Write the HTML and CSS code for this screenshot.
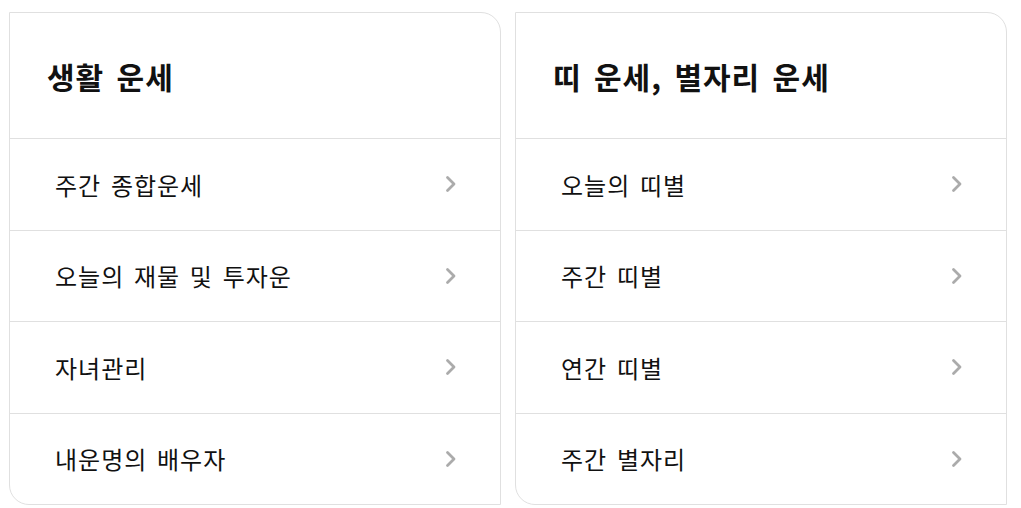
FILE: index.html
```html
<!DOCTYPE html>
<html lang="ko">
<head>
<meta charset="utf-8">
<link rel="stylesheet" href="styles.css">
</head>
<body>
<div class="wrap">
  <section class="card">
    <h2 class="card-title">생활 운세</h2>
    <ul class="list">
      <li class="item"><span>주간 종합운세</span><svg class="chev" viewBox="0 0 12 18"><polyline points="2.5,2.5 9,9 2.5,15.5"/></svg></li>
      <li class="item"><span>오늘의 재물 및 투자운</span><svg class="chev" viewBox="0 0 12 18"><polyline points="2.5,2.5 9,9 2.5,15.5"/></svg></li>
      <li class="item"><span>자녀관리</span><svg class="chev" viewBox="0 0 12 18"><polyline points="2.5,2.5 9,9 2.5,15.5"/></svg></li>
      <li class="item"><span>내운명의 배우자</span><svg class="chev" viewBox="0 0 12 18"><polyline points="2.5,2.5 9,9 2.5,15.5"/></svg></li>
    </ul>
  </section>
  <section class="card">
    <h2 class="card-title">띠 운세, 별자리 운세</h2>
    <ul class="list">
      <li class="item"><span>오늘의 띠별</span><svg class="chev" viewBox="0 0 12 18"><polyline points="2.5,2.5 9,9 2.5,15.5"/></svg></li>
      <li class="item"><span>주간 띠별</span><svg class="chev" viewBox="0 0 12 18"><polyline points="2.5,2.5 9,9 2.5,15.5"/></svg></li>
      <li class="item"><span>연간 띠별</span><svg class="chev" viewBox="0 0 12 18"><polyline points="2.5,2.5 9,9 2.5,15.5"/></svg></li>
      <li class="item"><span>주간 별자리</span><svg class="chev" viewBox="0 0 12 18"><polyline points="2.5,2.5 9,9 2.5,15.5"/></svg></li>
    </ul>
  </section>
</div>
</body>
</html>
```
FILE: styles.css
```css
html, body {
  margin: 0;
  padding: 0;
  background: #ffffff;
}
body {
  font-family: "Noto Sans CJK KR", "Noto Sans", sans-serif;
  color: #111111;
}
.wrap {
  display: flex;
  gap: 14px;
  padding: 12px 0 0 9px;
}
.card {
  box-sizing: border-box;
  width: 492px;
  height: 493px;
  border: 1px solid #e0e0e0;
  border-radius: 0 20px 0 20px;
  display: flex;
  flex-direction: column;
  overflow: hidden;
}
.card-title {
  box-sizing: border-box;
  height: 126px;
  margin: 0;
  padding: 0 0 0 37px;
  display: flex;
  align-items: center;
  font-size: 30px;
  font-weight: 700;
  letter-spacing: 1px;
  word-spacing: 3px;
  border-bottom: 1px solid #e0e0e0;
  color: #111111;
}
.list {
  list-style: none;
  margin: 0;
  padding: 0;
  flex: 1;
  display: flex;
  flex-direction: column;
}
.item {
  flex: 1;
  display: flex;
  align-items: center;
  justify-content: space-between;
  padding: 0 43px 0 45px;
  font-size: 24px;
  letter-spacing: 1px;
  word-spacing: 2px;
  color: #111111;
}
.item + .item {
  border-top: 1px solid #e0e0e0;
}
.chev {
  width: 12px;
  height: 18px;
  fill: none;
  stroke: #ababab;
  stroke-width: 2.8;
  stroke-linecap: round;
  stroke-linejoin: round;
}
```
